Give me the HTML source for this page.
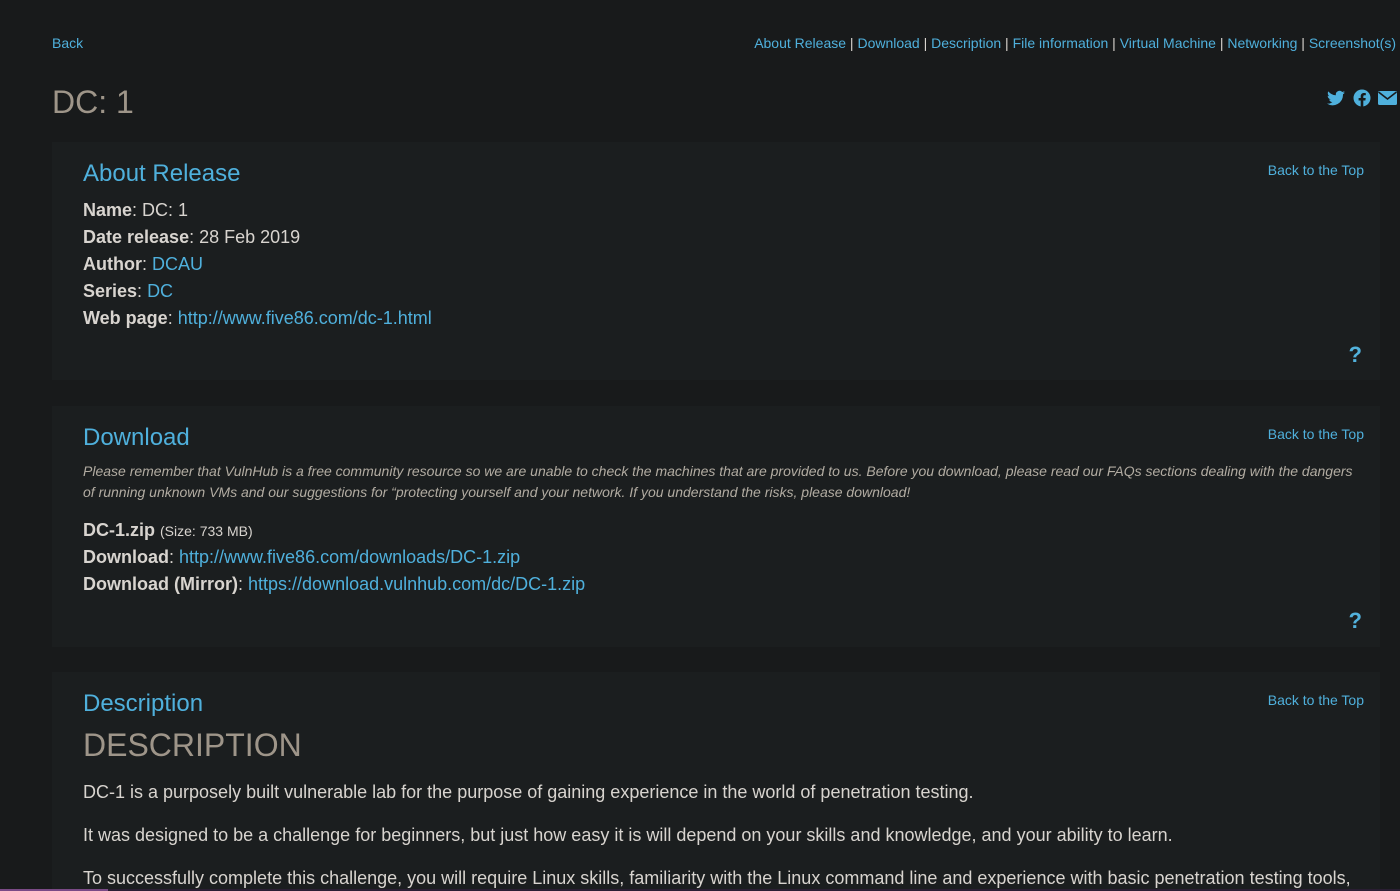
<!DOCTYPE html>
<html style="overflow:hidden;height:891px"><head><meta charset="utf-8"><style>
body{margin:0;background:#181a1b;font-family:"Liberation Sans",Arial,sans-serif;color:#d8d4cf;width:1400px;height:891px;overflow:hidden;position:relative}
a{color:#4fb0dc;text-decoration:none}
.abs{position:absolute}
.panel{position:absolute;left:52px;width:1328px;background:#1b1e1f}
.h{position:absolute;left:31px;font-size:24px;color:#4fb0dc}
.top{position:absolute;right:16px;font-size:14px;color:#4fb0dc}
.l{position:absolute;left:31px;font-size:18px;white-space:nowrap}
b{color:#d8d4cf}
.q{position:absolute;right:18px;color:#52b2dc;font-weight:bold;font-size:22px}
</style></head><body>
<a class="abs" style="left:52px;top:35px;font-size:14px">Back</a>
<div class="abs" style="right:4px;top:35px;font-size:14px;color:#d8d4cf"><a>About Release</a> | <a>Download</a> | <a>Description</a> | <a>File information</a> | <a>Virtual Machine</a> | <a>Networking</a> | <a>Screenshot(s)</a></div>
<div class="abs" style="left:52px;top:84px;font-size:32px;color:#9e9589">DC: 1</div>
<svg class="abs" style="left:1327px;top:89px" width="72" height="18" viewBox="0 0 72 18">
<path fill="#4fb0dc" d="M18 3.5c-.7.3-1.4.5-2.1.6.8-.5 1.3-1.2 1.6-2-.7.4-1.5.7-2.300.9A3.7 3.7 0 0 0 8.9 6.3 10.4 10.4 0 0 1 1.3 2.4a3.7 3.7 0 0 0 1.1 4.9c-.6 0-1.2-.2-1.700-.5 0 1.8 1.3 3.3 3 3.6-.5.2-1.100.2-1.700.1.5 1.5 1.8 2.5 3.4 2.6A7.4 7.4 0 0 1 0 14.6 10.4 10.4 0 0 0 16 5.8v-.5c.8-.5 1.4-1.1 2-1.8z"/>
<circle cx="35" cy="9" r="8.5" fill="#4fb0dc"/><path fill="#181a1b" d="M36.3 18v-6.5h2.1l.3-2.5h-2.4V7.5c0-.7.2-1.2 1.2-1.2h1.3V4.1c-.2 0-1-.1-1.9-.1-1.9 0-3.2 1.2-3.2 3.3V9h-2.1v2.5h2.1V18z"/>
<rect x="51" y="2" width="19" height="14" rx="1.5" fill="#4fb0dc"/><path d="M51.5 3l9 7 9-7" stroke="#181a1b" stroke-width="1.6" fill="none"/>
</svg>

<div class="panel" style="top:142px;height:238px">
<div class="h" style="top:18px">About Release</div><div class="top" style="top:20px">Back to the Top</div>
<div class="l" style="top:58px"><b>Name</b>: DC: 1</div>
<div class="l" style="top:85px"><b>Date release</b>: 28 Feb 2019</div>
<div class="l" style="top:112px"><b>Author</b>: <a>DCAU</a></div>
<div class="l" style="top:139px"><b>Series</b>: <a>DC</a></div>
<div class="l" style="top:166px"><b>Web page</b>: <a>http://www.five86.com/dc-1.html</a></div>
<div class="q" style="top:200px">?</div>
</div>

<div class="panel" style="top:406px;height:241px">
<div class="h" style="top:18px">Download</div><div class="top" style="top:20px">Back to the Top</div>
<div class="abs" style="left:31px;top:55px;width:1280px;font-size:14px;font-style:italic;line-height:21px;color:#b2aca2">Please remember that VulnHub is a free community resource so we are unable to check the machines that are provided to us. Before you download, please read our FAQs sections dealing with the dangers of running unknown VMs and our suggestions for “protecting yourself and your network. If you understand the risks, please download!</div>
<div class="l" style="top:114px"><b>DC-1.zip</b> <span style="font-size:14px">(Size: 733 MB)</span></div>
<div class="l" style="top:141px"><b>Download</b>: <a>http://www.five86.com/downloads/DC-1.zip</a></div>
<div class="l" style="top:168px"><b>Download (Mirror)</b>: <a>https://download.vulnhub.com/dc/DC-1.zip</a></div>
<div class="q" style="top:202px">?</div>
</div>

<div class="panel" style="top:672px;height:219px">
<div class="h" style="top:18px">Description</div><div class="top" style="top:20px">Back to the Top</div>
<div class="l" style="top:55px;font-size:32px;color:#9e9589">DESCRIPTION</div>
<div class="l" style="top:110px">DC-1 is a purposely built vulnerable lab for the purpose of gaining experience in the world of penetration testing.</div>
<div class="l" style="top:153px">It was designed to be a challenge for beginners, but just how easy it is will depend on your skills and knowledge, and your ability to learn.</div>
<div class="l" style="top:196px">To successfully complete this challenge, you will require Linux skills, familiarity with the Linux command line and experience with basic penetration testing tools,</div>
</div>
<div class="abs" style="left:0;top:889px;width:108px;height:2px;background:#7a4a86"></div>
<div class="abs" style="left:108px;top:889px;width:1292px;height:2px;background:#2a1e33"></div>
</body></html>
